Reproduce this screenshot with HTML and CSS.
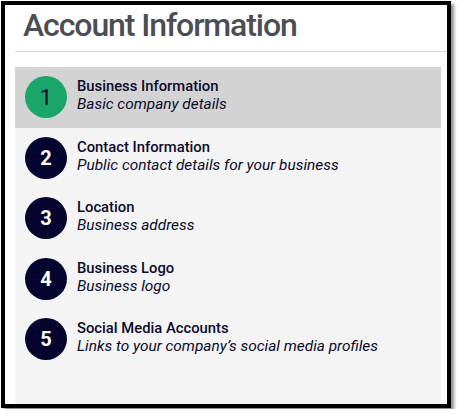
FILE: index.html
```html
<!DOCTYPE html>
<html>
<head>
<meta charset="utf-8">
<link rel="stylesheet" href="styles.css">
</head>
<body>
<div class="frame">
  <div class="header">
    <h1 class="title">Account Information</h1>
  </div>
  <div class="panel">
    <div class="step active">
      <div class="num">1</div>
      <div class="info">
        <div class="name">Business Information</div>
        <div class="desc">Basic company details</div>
      </div>
    </div>
    <div class="step">
      <div class="num">2</div>
      <div class="info">
        <div class="name">Contact Information</div>
        <div class="desc">Public contact details for your business</div>
      </div>
    </div>
    <div class="step">
      <div class="num">3</div>
      <div class="info">
        <div class="name">Location</div>
        <div class="desc">Business address</div>
      </div>
    </div>
    <div class="step">
      <div class="num">4</div>
      <div class="info">
        <div class="name">Business Logo</div>
        <div class="desc">Business logo</div>
      </div>
    </div>
    <div class="step">
      <div class="num">5</div>
      <div class="info">
        <div class="name">Social Media Accounts</div>
        <div class="desc">Links to your company’s social media profiles</div>
      </div>
    </div>
  </div>
</div>
</body>
</html>
```

FILE: styles.css
```css
html, body {
  margin: 0;
  padding: 0;
  background: #ffffff;
}
body {
  font-family: Roboto, "Liberation Sans", sans-serif;
}
.frame {
  margin: 1px;
  width: 450px;
  height: 407px;
  box-sizing: border-box;
  border: 4px solid #000;
  background: #fff;
  box-shadow: 3px 3px 3px rgba(0, 0, 0, 0.45);
  display: flex;
  flex-direction: column;
}
.header {
  margin-left: 10px;
  padding: 1px 0 7px 8px;
  border-bottom: 1px solid #d6d6d6;
}
.title {
  margin: 0;
  font-size: 32px;
  line-height: 38px;
  font-weight: 500;
  letter-spacing: -1.1px;
  color: #4b4e53;
}
.panel {
  flex: 1;
  margin: 15px 6px 0 10px;
  background: #f4f4f4;
}
.step {
  display: flex;
  align-items: flex-start;
  gap: 10px;
  padding: 9.25px 10px;
}
.step.active {
  background: #d3d3d3;
}
.num {
  width: 42px;
  height: 42px;
  flex: none;
  border-radius: 50%;
  background: #04042e;
  color: #fff;
  font-size: 20px;
  font-weight: 700;
  display: flex;
  align-items: center;
  justify-content: center;
}
.active .num {
  background: #1aa66b;
  color: #0b0b24;
  font-weight: 400;
  font-size: 22px;
}
.info {
  padding-top: 1px;
  color: #0b0b2c;
  line-height: 18px;
}
.name {
  font-size: 14.8px;
  font-weight: 500;
}
.desc {
  font-size: 15.4px;
  font-style: italic;
}
```
